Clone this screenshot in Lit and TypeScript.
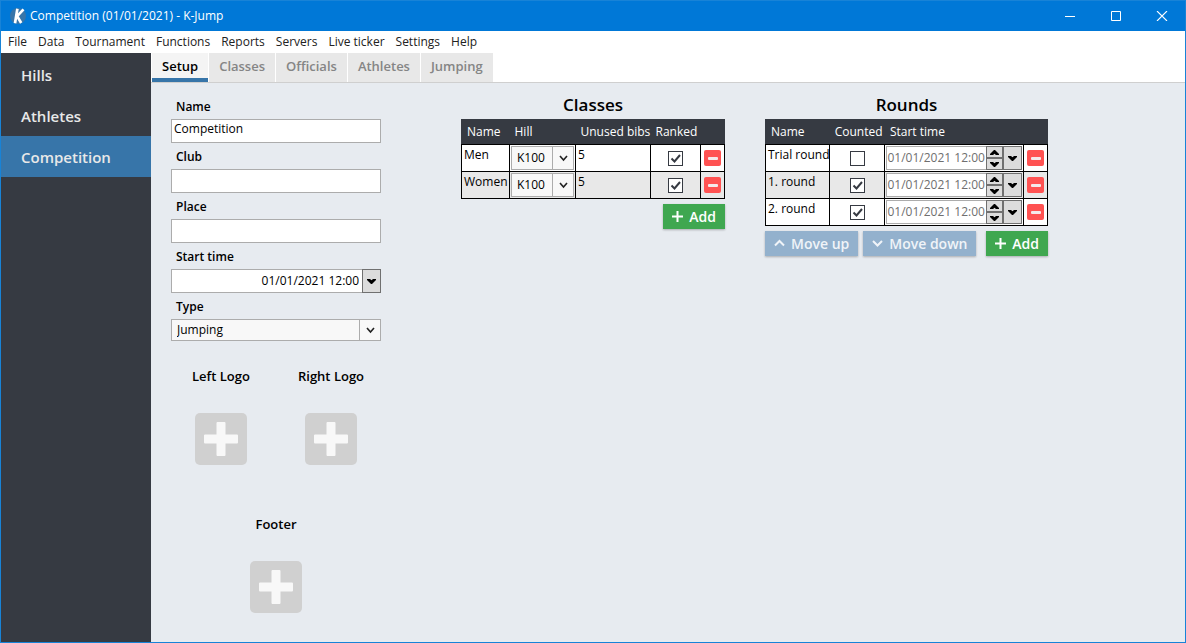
import { LitElement, html, css, svg, nothing } from "lit";
import { customElement, property, state } from "lit/decorators.js";
import { classMap } from "lit/directives/class-map.js";

const icons = {
  logo: svg`<circle cx="9" cy="9" r="8" fill="#3775a9"/><path d="M8.4 1.800 6 16.200M14.500 2.400 8.2 9.2l4 6.800" fill="none" stroke="#fff" stroke-width="2.700"/>`,
  minimize: svg`<path d="M1 5.5h10" stroke="#fff"/>`,
  maximize: svg`<path d="M1.5.5h9v9h-9z" fill="none" stroke="#fff"/>`,
  close: svg`<path d="M1 0l10 10M11 0L1 10" fill="none" stroke="#fff" stroke-width="1.1"/>`,
  chevron: svg`<path d="M1 1l3.5 4L8 1" fill="none" stroke="#222" stroke-width="1.6"/>`,
  arrowDown: svg`<path d="M0 0h3l1.500 1.200L6 0h3v1L5 5H4L0 1z" fill="#000"/>`,
  arrowUp: svg`<path d="M0 5h3l1.500-1.200L6 5h3V4L5 0H4L0 4z" fill="#000"/>`,
  plus: svg`<path d="M5.500 0v11M0 5.500h11" fill="none" stroke="#fff" stroke-width="2"/>`,
  up: svg`<path d="M1 7.500l4.500-4.500L10 7.500" fill="none" stroke="#f0f4f8" stroke-width="2"/>`,
  down: svg`<path d="M1 3l4.500 4.500L10 3" fill="none" stroke="#f0f4f8" stroke-width="2"/>`,
  remove: svg`<rect width="17" height="16" rx="2" fill="#ff5252"/><rect x="4" y="7" width="10" height="3" rx="1" fill="#f4e9ea"/>`,
  add: svg`<rect width="52" height="52" rx="5" fill="#d0d0d0"/><path d="M22.500 9h7a1 1 0 0 1 1 1v11.500H42a1 1 0 0 1 1 1v7a1 1 0 0 1-1 1H30.500V42a1 1 0 0 1-1 1h-7a1 1 0 0 1-1-1V30.500H10a1 1 0 0 1-1-1v-7a1 1 0 0 1 1-1h11.500V10a1 1 0 0 1 1-1z" fill="#f8f8f8"/>`,
};

const icon = (name: keyof typeof icons, w: number, h: number) =>
  html`<svg width=${w} height=${h} viewBox="0 0 ${w} ${h}" aria-hidden="true">${icons[name]}</svg>`;

const base = css`
  * { box-sizing: border-box; }
  svg { display: block; flex: none; }
  button, input, select { font: inherit; color: inherit; margin: 0; padding: 0; border: 0; border-radius: 0; background: none; }
`;

@customElement("combo-box")
export class ComboBox extends LitElement {
  static styles = [base, css`
    :host { display: block; height: 22px; }
    .box { display: grid; grid-template-columns: 1fr 22px; height: 100%; }
    select { grid-area: 1 / 1 / 2 / 3; appearance: none; width: 100%; padding: 0 5px; border: 1px solid #acacac; background: #f8f8f8; }
    .drop { grid-area: 1 / 2; display: grid; place-items: center; border: 1px solid #acacac; pointer-events: none; }
  `];
  @property() label = "";
  @property({ attribute: false }) options: string[] = [];
  render() {
    return html`<div class="box">
      <select aria-label=${this.label}>${this.options.map((o) => html`<option>${o}</option>`)}</select>
      <span class="drop">${icon("chevron", 9, 7)}</span>
    </div>`;
  }
}

@customElement("date-box")
export class DateBox extends LitElement {
  static styles = [base, css`
    :host { display: block; height: 24px; }
    .box { display: flex; height: 100%; background: #fff; border: 1px solid #acacac; }
    input { flex: 1; min-width: 0; text-align: right; padding-right: 3px; }
    input.muted { color: #6f6f6f; padding-right: 1px; }
    .spin { display: grid; grid-template-rows: 1fr 1fr; width: 17px; margin: -1px 0; }
    button { display: grid; place-items: center; background: #dcdcdc; border: 1px solid #707070; }
    .drop { width: 19px; margin: -1px -1px -1px 0; }
  `];
  @property() label = "";
  @property() value = "";
  @property({ type: Boolean }) spinner = false;
  render() {
    return html`<div class="box">
      <input class=${classMap({ muted: this.spinner })} aria-label=${this.label} .value=${this.value}>
      ${this.spinner ? html`<span class="spin">
        <button aria-label="Later">${icon("arrowUp", 9, 5)}</button>
        <button aria-label="Earlier">${icon("arrowDown", 9, 5)}</button>
      </span>` : nothing}
      <button class="drop" aria-label="Open calendar">${icon("arrowDown", 9, 5)}</button>
    </div>`;
  }
}

@customElement("app-root")
export class AppRoot extends LitElement {
  static styles = [base, css`
    :host {
      display: flex; flex-direction: column; box-sizing: border-box; min-height: 100vh;
      border: 1px solid #1883d7; background: #fff; color: #000;
      font: 12px/16px "Open Sans", "Noto Sans", sans-serif;
    }
    .title { display: flex; align-items: center; height: 30px; padding-left: 8px; background: #0078d7; color: #fff; }
    .title h1 { flex: 1; margin: 0 0 0 3px; font: inherit; }
    .title button { width: 46px; height: 30px; display: grid; place-items: center; }
    .menu { display: flex; gap: 11px; height: 22px; align-items: center; padding-left: 7px; color: #212121; }
    .main { display: flex; flex: 1; }
    .side { width: 150px; flex: none; padding-top: 1px; background: #363a42; }
    .side a { display: flex; align-items: center; height: 41px; padding-left: 20px; color: #e8e8e8; text-decoration: none; font-size: 15px; font-weight: 600; }
    .side a.on { background: #3775a9; }
    .page { flex: 1; min-width: 0; display: flex; flex-direction: column; }
    .tabs { display: flex; gap: 1px; height: 30px; padding-left: 1px; border-bottom: 1px solid #cfcfcf; }
    .tabs button { height: 29px; padding: 0 10px; background: #e8e8e8; color: #858585; font-size: 13px; font-weight: 600; border-bottom: 4px solid #e8e8e8; }
    .tabs button.on { background: #f4f4f4; color: #000; border-bottom-color: #3775a9; }
    .body { flex: 1; display: flex; align-items: flex-start; background: #e7ebf0; padding: 10px 20px; }
    .form { width: 210px; flex: none; margin-right: 80px; }
    .field { display: flex; flex-direction: column; }
    .field label { padding: 6px 5px 4px; font-weight: 600; }
    .caption { padding: 6px 0 4px; font-size: 13px; font-weight: 600; }
    .field input { height: 24px; padding: 0 2px 5px; border: 1px solid #acacac; background: #fff; }
    .logos { display: flex; flex-wrap: wrap; justify-content: center; column-gap: 10px; margin: 21px -5px 0; }
    .logo { width: 100px; height: 148px; display: flex; flex-direction: column; align-items: center; gap: 25px; }
    .logo:last-child { height: auto; }
    .panel { margin-right: 40px; }
    .panel h2 { margin: 0; height: 26px; font-size: 17px; line-height: 24px; font-weight: 550; text-align: center; }
    table { border-collapse: collapse; table-layout: fixed; }
    .classes { width: 264px; }
    .rounds { width: 283px; }
    th { height: 25px; padding: 0 0 0 5px; background: #363a42; color: #fff; font-weight: 400; text-align: left; white-space: nowrap; }
    thead { border: 1px solid #363a42; }
    td { height: 27px; padding: 1px; border: 1px solid #000; background: #fff; white-space: nowrap; }
    tr:nth-child(even) td { background: #e8e8e8; }
    td.text { vertical-align: top; padding: 2px; }
    td input { display: block; appearance: none; width: 15px; height: 15px; margin: 0 auto; border: 1px solid #363a42; background: #fff; }
    td .tick { display: grid; place-items: center; }
    td .tick > * { grid-area: 1 / 1; }
    td .tick svg { pointer-events: none; visibility: hidden; }
    td .tick input:checked + svg { visibility: visible; }
    td button { display: block; margin: 0 auto; }
    td date-box, td combo-box { height: 24px; }
    .c48 { width: 48px; } .c66 { width: 66px; } .c75 { width: 75px; } .c50 { width: 50px; } .c24 { width: 24px; }
    .c64 { width: 64px; } .c55 { width: 55px; } .c138 { width: 138px; }
    .actions { display: flex; gap: 5px; margin-top: 5px; }
    .actions button { height: 25px; display: flex; align-items: center; gap: 6px; padding: 0 9px; background: #93b1cd; color: #f0f4f8; font-size: 14px; font-weight: 600; box-shadow: 0 1px 2px #0004; white-space: nowrap; }
    .actions .add { margin-left: auto; background: #3fa750; color: #fff; }
  `];

  @state() private page = "Competition";
  @state() private tab = "Setup";

  private tick(label: string, checked: boolean) {
    return html`<td><div class="tick"><input type="checkbox" aria-label=${label} .checked=${checked}>
      <svg width="15" height="15" viewBox="0 0 15 15"><path d="M3.500 7.500l3 3 5.500-6.500" fill="none" stroke="#363a42" stroke-width="2"/></svg></div></td>`;
  }

  private removeCell(name: string) {
    return html`<td><button aria-label="Remove ${name}">${icon("remove", 17, 16)}</button></td>`;
  }

  private logo(name: string) {
    return html`<div class="logo"><span class="caption">${name}</span>
      <button aria-label="Choose ${name}">${icon("add", 52, 52)}</button></div>`;
  }

  render() {
    return html`
      <header class="title">
        ${icon("logo", 18, 18)}
        <h1>Competition (01/01/2021) - K-Jump</h1>
        <button aria-label="Minimize">${icon("minimize", 12, 10)}</button>
        <button aria-label="Maximize">${icon("maximize", 12, 10)}</button>
        <button aria-label="Close">${icon("close", 12, 10)}</button>
      </header>
      <nav class="menu" aria-label="Menu">
        ${["File", "Data", "Tournament", "Functions", "Reports", "Servers", "Live ticker", "Settings", "Help"].map((m) => html`<button>${m}</button>`)}
      </nav>
      <div class="main">
        <nav class="side" aria-label="Sections">
          ${["Hills", "Athletes", "Competition"].map((p) => html`<a href="#${p}" class=${classMap({ on: p === this.page })} @click=${() => (this.page = p)}>${p}</a>`)}
        </nav>
        <main class="page">
          <div class="tabs" role="tablist">
            ${["Setup", "Classes", "Officials", "Athletes", "Jumping"].map((t) => html`<button role="tab" aria-selected=${t === this.tab} class=${classMap({ on: t === this.tab })} @click=${() => (this.tab = t)}>${t}</button>`)}
          </div>
          <div class="body">
            <form class="form" @submit=${(e: Event) => e.preventDefault()}>
              <div class="field"><label for="name">Name</label><input id="name" .value=${"Competition"}></div>
              <div class="field"><label for="club">Club</label><input id="club"></div>
              <div class="field"><label for="place">Place</label><input id="place"></div>
              <div class="field"><label for="start">Start time</label><date-box id="start" label="Start time" value="01/01/2021 12:00"></date-box></div>
              <div class="field"><label for="type">Type</label><combo-box id="type" label="Type" .options=${["Jumping"]}></combo-box></div>
              <div class="logos">${this.logo("Left Logo")}${this.logo("Right Logo")}${this.logo("Footer")}</div>
            </form>
            <section class="panel">
              <h2>Classes</h2>
              <table class="classes">
                <thead><tr><th class="c48">Name</th><th class="c66">Hill</th><th class="c75">Unused bibs</th><th class="c50">Ranked</th><th class="c24"></th></tr></thead>
                <tbody>
                  ${["Men", "Women"].map((n) => html`<tr><td class="text">${n}</td>
                    <td><combo-box label="Hill for ${n}" .options=${["K100"]}></combo-box></td>
                    <td class="text">5</td>${this.tick(`${n} ranked`, true)}${this.removeCell(n)}</tr>`)}
                </tbody>
              </table>
              <div class="actions"><button class="add">${icon("plus", 11, 11)}Add</button></div>
            </section>
            <section class="panel">
              <h2>Rounds</h2>
              <table class="rounds">
                <thead><tr><th class="c64">Name</th><th class="c55">Counted</th><th class="c138">Start time</th><th class="c24"></th></tr></thead>
                <tbody>
                  ${["Trial round", "1. round", "2. round"].map((n, i) => html`<tr><td class="text">${n}</td>
                    ${this.tick(`${n} counted`, i > 0)}
                    <td><date-box spinner label="Start of ${n}" value="01/01/2021 12:00"></date-box></td>${this.removeCell(n)}</tr>`)}
                </tbody>
              </table>
              <div class="actions">
                <button disabled>${icon("up", 11, 11)}Move up</button>
                <button disabled>${icon("down", 11, 11)}Move down</button>
                <button class="add">${icon("plus", 11, 11)}Add</button>
              </div>
            </section>
          </div>
        </main>
      </div>`;
  }
}
